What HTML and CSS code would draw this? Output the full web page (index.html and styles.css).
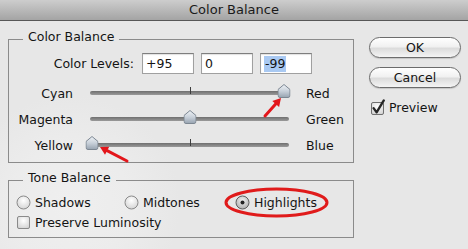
FILE: index.html
```html
<!DOCTYPE html>
<html lang="en">
<head>
  <meta charset="UTF-8" />
  <title>Color Balance</title>
  <link rel="stylesheet" href="styles.css">
</head>
<body>

  <div class="window">
    <!-- title bar -->
    <header class="titlebar">Color Balance</header>

    <div class="dialog">
      <div class="groups">

        <fieldset class="group group-balance">
          <legend>Color Balance</legend>
          <div class="levels">
            <span class="levels-label">Color Levels:</span>
            <span class="field">+95</span>
            <span class="field">0</span>
            <span class="field"><span class="selected">-99</span></span>
          </div>

          <div class="slider-row">
            <span class="side-left">Cyan</span>
            <div class="track">
              <span class="tick"></span>
              <svg class="thumb" style="left: 97.5%" width="13" height="14" viewBox="0 0 13 14"><path d="M0.5 5.5 L6.5 0.5 L12.5 5.5 L12.5 11.5 Q12.5 13.5 10.5 13.5 L2.5 13.5 Q0.5 13.5 0.5 11.5 Z" fill="url(#thumbFill)" stroke="#7d8792"/></svg>
            </div>
            <span class="side-right">Red</span>
          </div>

          <div class="slider-row">
            <span class="side-left">Magenta</span>
            <div class="track">
              <span class="tick"></span>
              <svg class="thumb" style="left: 50.2%" width="13" height="14" viewBox="0 0 13 14"><path d="M0.5 5.5 L6.5 0.5 L12.5 5.5 L12.5 11.5 Q12.5 13.5 10.5 13.5 L2.5 13.5 Q0.5 13.5 0.5 11.5 Z" fill="url(#thumbFill)" stroke="#7d8792"/></svg>
            </div>
            <span class="side-right">Green</span>
          </div>

          <div class="slider-row">
            <span class="side-left">Yellow</span>
            <div class="track">
              <span class="tick"></span>
              <svg class="thumb" style="left: 1%" width="13" height="14" viewBox="0 0 13 14"><path d="M0.5 5.5 L6.5 0.5 L12.5 5.5 L12.5 11.5 Q12.5 13.5 10.5 13.5 L2.5 13.5 Q0.5 13.5 0.5 11.5 Z" fill="url(#thumbFill)" stroke="#7d8792"/></svg>
            </div>
            <span class="side-right">Blue</span>
          </div>
        </fieldset>

        <fieldset class="group group-tone">
          <legend>Tone Balance</legend>
          <div class="radios">
            <span class="option">
              <svg width="15" height="15" viewBox="0 0 15 15"><circle cx="7.5" cy="7.5" r="6.5" fill="url(#radioFill)" stroke="#8a8a8a"/></svg>
              Shadows
            </span>
            <span class="option">
              <svg width="15" height="15" viewBox="0 0 15 15"><circle cx="7.5" cy="7.5" r="6.5" fill="url(#radioFill)" stroke="#8a8a8a"/></svg>
              Midtones
            </span>
            <span class="option">
              <svg width="15" height="15" viewBox="0 0 15 15"><circle cx="7.5" cy="7.5" r="6.5" fill="url(#radioOn)" stroke="#5e5e5e"/><circle cx="7.5" cy="7.5" r="2" fill="#222"/></svg>
              Highlights
            </span>
          </div>
          <div class="option preserve">
            <svg width="15" height="15" viewBox="0 0 15 15"><rect x="1.5" y="1.5" width="12" height="12" rx="1.5" fill="url(#radioFill)" stroke="#8a8a8a"/></svg>
            Preserve Luminosity
          </div>
        </fieldset>
      </div>

      <div class="actions">
        <button class="btn">OK</button>
        <button class="btn">Cancel</button>
        <div class="option preview">
          <svg width="16" height="17" viewBox="0 0 16 17"><rect x="1.5" y="3.5" width="12" height="12" rx="1.5" fill="url(#radioFill)" stroke="#6f6f6f"/><path d="M3.6 9.2 L6.6 13.4 L13.8 1.4" fill="none" stroke="#262626" stroke-width="2.3" stroke-linecap="round" stroke-linejoin="round"/></svg>
          Preview
        </div>
      </div>
    </div>

    <!-- red marks drawn over the dialog -->
    <svg class="marks" width="468" height="249" viewBox="0 0 468 249">
      <defs>
        <linearGradient id="thumbFill" x1="0" y1="0" x2="0" y2="1">
          <stop offset="0" stop-color="#eef2f6"/>
          <stop offset="0.5" stop-color="#c9d1da"/>
          <stop offset="1" stop-color="#97a3b0"/>
        </linearGradient>
        <radialGradient id="radioFill" cx="0.5" cy="0.35" r="0.7">
          <stop offset="0" stop-color="#ffffff"/>
          <stop offset="1" stop-color="#d2d2d2"/>
        </radialGradient>
        <radialGradient id="radioOn" cx="0.5" cy="0.35" r="0.7">
          <stop offset="0" stop-color="#f2f2f2"/>
          <stop offset="1" stop-color="#a9a9a9"/>
        </radialGradient>
      </defs>
      <line x1="265" y1="116" x2="275.7" y2="104" stroke="#e3161b" stroke-width="3" stroke-linecap="round"/>
      <polygon points="281,98 279.1,107 272.3,101" fill="#e3161b"/>
      <line x1="127" y1="161" x2="107.1" y2="150.7" stroke="#e3161b" stroke-width="3" stroke-linecap="round"/>
      <polygon points="100,147 109.2,146.7 105,154.7" fill="#e3161b"/>
      <ellipse cx="276.5" cy="202.5" rx="50.5" ry="13.5" fill="none" stroke="#e01b1b" stroke-width="3"/>
    </svg>
  </div>

</body>
</html>
```

FILE: styles.css
```css
* {
  box-sizing: border-box;
}
body, html {
  margin: 0;
  padding: 0;
  font-family: 'DejaVu Sans', sans-serif;
  font-size: 12.5px;
  color: #141414;
  overflow: hidden;
}
.window {
  position: relative;
  width: 468px;
  height: 249px;
  background: radial-gradient(circle at 70px 205px, #efefef 0, #ececec 60px, #e7e7e7 110px);
}
.titlebar {
  height: 21px;
  line-height: 20px;
  text-align: center;
  font-size: 13px;
  color: #1a1a1a;
  background: linear-gradient(#cdcdcd, #a4a4a4);
  border-bottom: 1px solid #575757;
}
.dialog {
  display: flex;
  gap: 15px;
  padding-left: 8px;
}
.groups {
  width: 346px;
}
.group {
  margin: 0;
  padding: 0;
  border: 1px solid #8b8b8b;
}
.group legend {
  margin-left: 14px;
  padding: 0 5px 5px;
  line-height: 15px;
}
.group-balance {
  margin-top: 8px;
  padding-bottom: 4px;
}
.group-tone {
  margin-top: 7px;
  padding-bottom: 7px;
}

/* color levels fields */
.levels {
  display: flex;
  align-items: center;
  margin-top: 4px;
  height: 21px;
}
.levels-label {
  width: 125px;
  text-align: right;
  margin-right: 8px;
}
.field {
  width: 52px;
  height: 21px;
  margin-right: 7px;
  padding: 0 2px 0 3px;
  display: flex;
  align-items: center;
  background: #fff;
  border: 1px solid #a0a0a0;
  border-top-color: #7e7e7e;
  box-shadow: inset 0 1px 1px rgba(0,0,0,0.12);
}
.selected {
  background: #a9c9f2;
  padding: 1px 1px 1px 1px;
  line-height: 14px;
}

/* sliders */
.slider-row {
  display: grid;
  grid-template-columns: 64px 199px auto;
  column-gap: 17px;
  align-items: center;
  height: 26px;
}
.slider-row:first-of-type {
  margin-top: 6px;
}
.levels + .slider-row {
  margin-top: 6px;
}
.side-left {
  text-align: right;
}
.track {
  position: relative;
  height: 4px;
  border-radius: 2px;
  background: linear-gradient(#6f6f6f, #9a9a9a);
}
.tick {
  position: absolute;
  left: 100px;
  top: -4px;
  width: 1px;
  height: 7px;
  background: #3d3d3d;
}
.thumb {
  position: absolute;
  top: -7px;
  transform: translateX(-50%);
}

/* tone balance */
.radios {
  display: grid;
  grid-template-columns: 108px 111px auto;
  margin-top: 4px;
  padding-left: 7px;
}
.option {
  display: flex;
  align-items: center;
  gap: 4px;
  height: 16px;
}
.preserve {
  margin-top: 4px;
  padding-left: 7px;
}

/* buttons column */
.actions {
  width: 92px;
  padding-top: 16px;
  display: flex;
  flex-direction: column;
  gap: 9px;
}
.btn {
  height: 21px;
  padding: 0;
  font-family: 'DejaVu Sans', sans-serif;
  font-size: 12.5px;
  color: #141414;
  border: 1px solid #6c6c6c;
  border-radius: 11px;
  background: linear-gradient(#ffffff, #f1f1f1 45%, #dcdcdc 55%, #f4f4f4);
  box-shadow: 0 1px 1px rgba(0,0,0,0.15);
}
.preview {
  margin-top: 1px;
  padding-left: 1px;
  height: 18px;
  gap: 3px;
}
.marks {
  position: absolute;
  top: 0;
  left: 0;
  pointer-events: none;
}
```
